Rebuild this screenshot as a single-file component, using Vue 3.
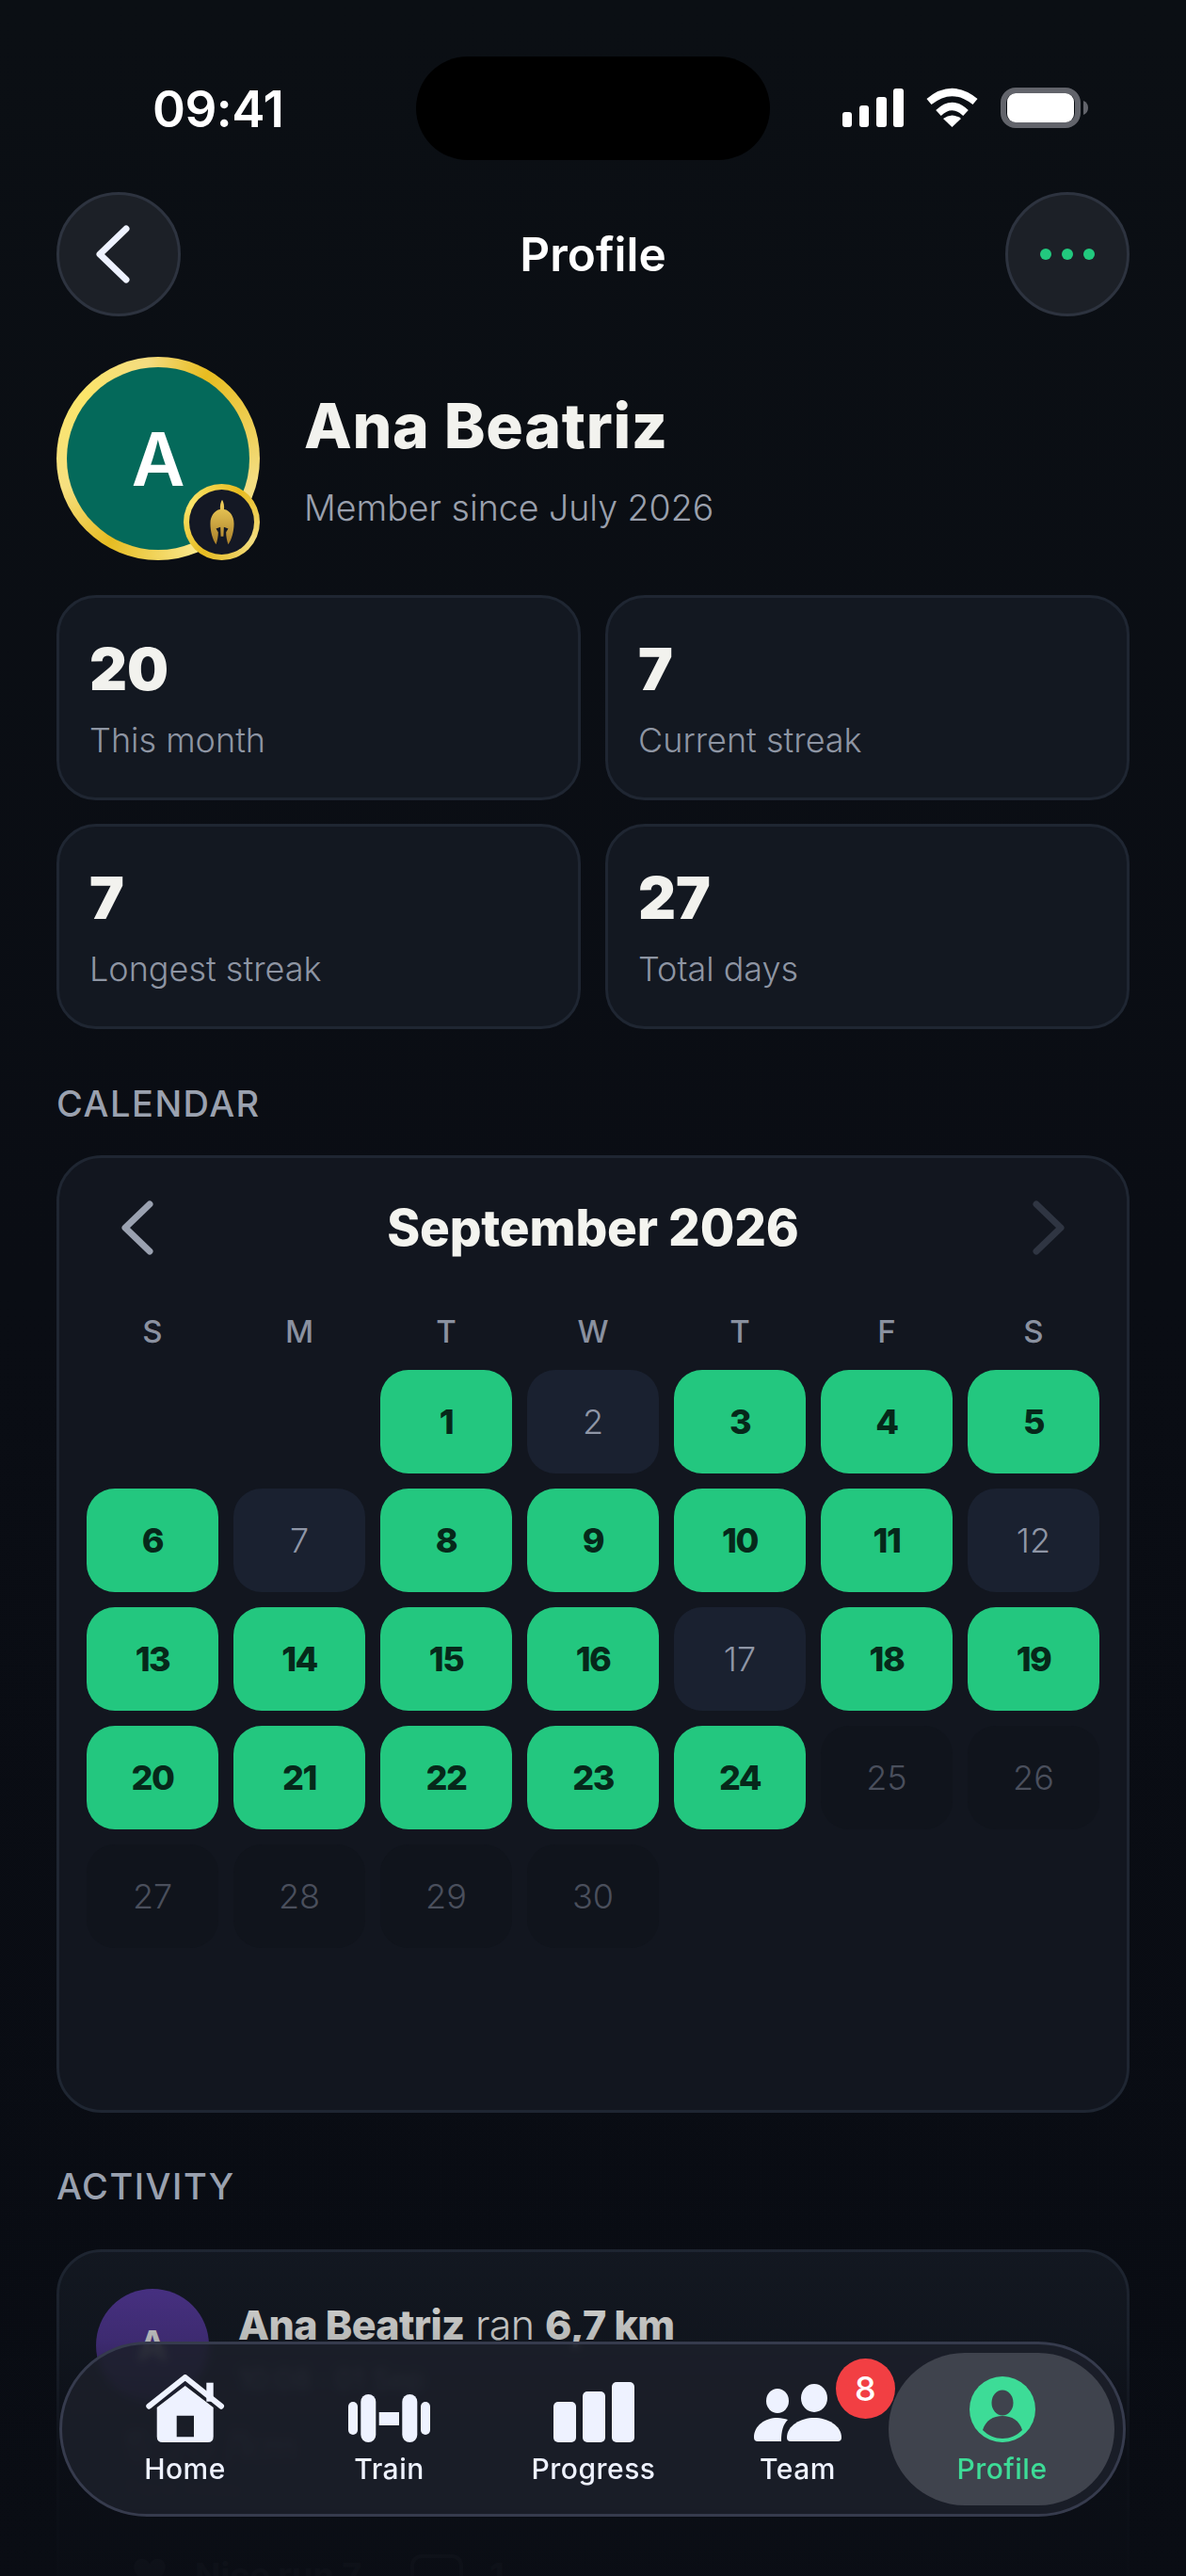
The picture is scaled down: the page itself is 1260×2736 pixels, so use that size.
<script setup>
const stats = [
  { value: '20', label: 'This month' },
  { value: '7', label: 'Current streak' },
  { value: '7', label: 'Longest streak' },
  { value: '27', label: 'Total days' },
]
const weekdays = ['S', 'M', 'T', 'W', 'T', 'F', 'S']
const missed = [2, 7, 12, 17]
const blanks = [1, 2]
const days = Array.from({ length: 30 }, (_, i) => {
  const n = i + 1
  return { n, state: n > 24 ? 'future' : missed.includes(n) ? 'missed' : 'done' }
})
</script>

<template>
  <div class="page">
    <div class="island"></div>
    <header class="status">
      <span class="time">09:41</span>
      <div class="status-icons">
        <svg class="signal" width="65" height="41" viewBox="0 0 65 41" fill="#fff">
          <rect x="0" y="25" width="10" height="16" rx="3" />
          <rect x="18" y="18" width="10" height="23" rx="3" />
          <rect x="36" y="9" width="11" height="32" rx="3" />
          <rect x="54" y="0" width="11" height="41" rx="3" />
        </svg>
        <svg class="wifi" width="57" height="42" viewBox="0 0 57 42" fill="none" stroke="#fff">
          <path d="M4 15 Q28.5 -5 53 15" stroke-width="8" />
          <path d="M14 27 Q28.5 13 43 27" stroke-width="8" />
          <path d="M28.5 42 L19 33 Q28.5 26 38 33 Z" fill="#fff" stroke="none" />
        </svg>
        <svg class="battery" width="93" height="43" viewBox="0 0 93 43" fill="none">
          <rect x="3" y="3" width="79" height="37" rx="13" stroke="#62646b" stroke-width="6" />
          <rect x="7" y="6" width="71" height="31" rx="9" fill="#fff" />
          <path d="M88 14 Q93 16 93 21.5 Q93 27 88 29 Z" fill="#62646b" />
        </svg>
      </div>
    </header>

    <nav class="topbar">
      <button class="round">
        <svg width="36" height="62" viewBox="0 0 36 62" fill="none" stroke="#eef2ff" stroke-width="7" stroke-linecap="round" stroke-linejoin="round">
          <path d="M32 4 L4 31 L32 58" />
        </svg>
      </button>
      <h1 class="title">Profile</h1>
      <button class="round">
        <span class="dots"><i></i><i></i><i></i></span>
      </button>
    </nav>

    <section class="identity">
      <div class="avatar">
        <div class="avatar-fill">A</div>
        <div class="rank">
          <div class="rank-inner">
            <svg width="26" height="52" viewBox="0 0 28 52">
              <defs>
                <linearGradient id="gold" x1="0" y1="0" x2="0" y2="1">
                  <stop offset="0" stop-color="#f3d15c" />
                  <stop offset="1" stop-color="#a97f2a" />
                </linearGradient>
              </defs>
              <path fill="url(#gold)" d="M14 0 C15.8 3 16.6 7 16.2 11 C23 12 27.5 19 27.5 27 C27.5 36 25 45 21 51 C19.5 47 18.5 42 18.5 37 L21 33 L16 31 L15.5 42 L12.5 42 L12 31 L7 33 L9.5 37 C9.5 42 8.5 47 7 51 C3 45 .5 36 .5 27 C.5 19 5 12 11.8 11 C11.4 7 12.2 3 14 0 Z" />
            </svg>
          </div>
        </div>
      </div>
      <div class="who">
        <h2 class="name">Ana Beatriz</h2>
        <p class="since">Member since July 2026</p>
      </div>
    </section>

    <section class="stats">
      <div v-for="s in stats" :key="s.label" class="stat">
        <div class="stat-value">{{ s.value }}</div>
        <div class="stat-label">{{ s.label }}</div>
      </div>
    </section>

    <h3 class="section cal-heading">CALENDAR</h3>
    <section class="calendar">
      <div class="month">
        <svg width="34" height="58" viewBox="0 0 34 58" fill="none" stroke="#9aa1b0" stroke-width="7" stroke-linecap="round" stroke-linejoin="round">
          <path d="M30 4 L4 29 L30 54" />
        </svg>
        <span class="month-name">September 2026</span>
        <svg width="34" height="58" viewBox="0 0 34 58" fill="none" stroke="#2f3542" stroke-width="7" stroke-linecap="round" stroke-linejoin="round">
          <path d="M4 4 L30 29 L4 54" />
        </svg>
      </div>
      <div class="weekdays">
        <span v-for="(d, i) in weekdays" :key="i">{{ d }}</span>
      </div>
      <div class="days">
        <span v-for="b in blanks" :key="'b' + b"></span>
        <div v-for="d in days" :key="d.n" class="day" :class="d.state">{{ d.n }}</div>
      </div>
    </section>

    <h3 class="section act-heading">ACTIVITY</h3>
    <section class="activity">
      <div class="entry">
        <div class="entry-avatar">A</div>
        <div>
          <p class="entry-line"><b>Ana Beatriz</b> ran <b>6,7 km</b></p>
          <p class="entry-time">10:08 · 01 Sep</p>
        </div>
      </div>
      <div class="entry-metric">5:20 /km</div>
      <div class="entry-caption">Pace today</div>
      <div class="entry-foot">
        <svg width="40" height="40" viewBox="0 0 24 24" fill="#4d5360"><path d="M12 21 C5 15 2 12 2 8 C2 5 4 3 7 3 C9 3 11 4 12 6 C13 4 15 3 17 3 C20 3 22 5 22 8 C22 12 19 15 12 21 Z" /></svg>
        <span>Nice run 7</span>
        <svg class="foot-box" width="56" height="40" viewBox="0 0 56 40" fill="none" stroke="#4d5360" stroke-width="4"><rect x="2" y="2" width="52" height="44" rx="10" /></svg>
        <span>1</span>
      </div>
    </section>

    <div class="fade"></div>

    <nav class="tabbar">
      <div class="tab">
        <svg width="84" height="72" viewBox="0 0 84 72">
          <path d="M11.7 35 L41.7 12 L71.7 35 V66 Q71.7 72 65.7 72 H17.7 Q11.7 72 11.7 66 Z M32.7 43.7 V66.3 H51 V43.7 Z" fill="#eef2ff" fill-rule="evenodd" />
          <path d="M3.3 33.7 L41.7 3 L80 33.7" fill="none" stroke="#eef2ff" stroke-width="6" stroke-linecap="round" stroke-linejoin="round" />
          <rect x="64.3" y="8.7" width="7.4" height="20" fill="#eef2ff" />
        </svg>
        <span>Home</span>
      </div>
      <div class="tab">
        <svg width="87" height="51" viewBox="0 0 87 51" fill="#eef2ff">
          <rect x="0" y="8" width="10" height="35" rx="5" />
          <rect x="13.3" y="0" width="16" height="51" rx="8" />
          <rect x="32.7" y="19" width="21.3" height="14" />
          <rect x="57.3" y="0" width="16" height="51" rx="8" />
          <rect x="77" y="8" width="10" height="35" rx="5" />
        </svg>
        <span>Train</span>
      </div>
      <div class="tab">
        <svg width="86" height="64" viewBox="0 0 86 64" fill="#eef2ff">
          <rect x="0" y="21" width="24" height="43" rx="5" />
          <rect x="31" y="10" width="24" height="54" rx="5" />
          <rect x="62" y="0" width="24" height="64" rx="5" />
        </svg>
        <span>Progress</span>
      </div>
      <div class="tab">
        <svg width="93" height="62" viewBox="0 0 93 62" fill="#eef2ff">
          <ellipse cx="25" cy="18" rx="12" ry="13" />
          <ellipse cx="64" cy="15" rx="14" ry="15" />
          <path d="M35 57 C35 44 50 36 64 36 C78 36 93 44 93 57 Q93 61 89 61 H39 Q35 61 35 57 Z" />
          <path d="M0 57 C0 44 12 36 25 36 C29 36 33 37 36 38 C31 43 29 50 29 61 H4 Q0 61 0 57 Z" />
        </svg>
        <span>Team</span>
        <b class="badge">8</b>
      </div>
      <div class="tab active">
        <svg width="70" height="70" viewBox="0 0 70 70">
          <circle cx="35" cy="35" r="35" fill="#3ddc97" />
          <ellipse cx="35" cy="28" rx="11.5" ry="13.5" fill="#3f434d" />
          <path d="M14 57 C17 47 25 42 35 42 C45 42 53 47 56 57 C50 63 43 66 35 66 C27 66 20 63 14 57 Z" fill="#3f434d" />
        </svg>
        <span>Profile</span>
      </div>
    </nav>
  </div>
</template>

<style>
html, body { margin: 0; background: #0a0d14; }
</style>

<style scoped>
* { box-sizing: border-box; }
.page {
  position: relative;
  width: 1260px;
  height: 2736px;
  overflow: hidden;
  padding: 0 60px;
  background: linear-gradient(180deg, #0b0f14 0%, #0a0d14 50%, #090c13 100%);
  font-family: Inter, "Liberation Sans", sans-serif;
  color: #f2f2ee;
}
h1, h2, h3, p { margin: 0; }
.island {
  position: absolute;
  left: 442px;
  top: 60px;
  width: 376px;
  height: 110px;
  border-radius: 55px;
  background: #000;
}
.status {
  height: 204px;
  display: flex;
  justify-content: space-between;
  padding: 93px 44px 0 102px;
}
.time { font-size: 53px; line-height: 46px; font-weight: 600; color: #fff; letter-spacing: -0.5px; }
.status-icons { display: flex; gap: 23px; height: 43px; align-items: flex-start; }
.signal { margin-top: 1px; }
.topbar {
  height: 132px;
  display: flex;
  align-items: center;
  justify-content: space-between;
}
.round {
  width: 132px;
  height: 132px;
  padding: 0;
  border-radius: 50%;
  background: #1c2027;
  border: 3px solid #2d333f;
  display: flex;
  align-items: center;
  justify-content: center;
}
.round svg { margin-left: -12px; }
.title { font-size: 49.5px; font-weight: 600; color: #fff; }
.dots { display: flex; gap: 11px; }
.dots i { width: 12px; height: 12px; border-radius: 50%; background: #22c97e; }
.identity {
  margin-top: 43px;
  display: flex;
  align-items: center;
  gap: 47px;
}
.avatar {
  position: relative;
  width: 216px;
  height: 216px;
  flex: none;
  border-radius: 50%;
  padding: 11px;
  background: conic-gradient(from 30deg, #e8bc20, #f3dd80 20%, #fbe98e 35%, #e6bc22 50%, #f6e080 62%, #fbe56a 78%, #f4dc80 90%, #e8bc20);
}
.avatar-fill {
  width: 100%;
  height: 100%;
  border-radius: 50%;
  background: #04695a;
  color: #fff;
  display: flex;
  align-items: center;
  justify-content: center;
  font-size: 78px;
  font-weight: 600;
}
.rank {
  position: absolute;
  right: 0;
  bottom: 0;
  width: 81px;
  height: 81px;
  border-radius: 50%;
  padding: 6px;
  background: conic-gradient(from 30deg, #e8bc20, #f3dd80 25%, #e6bc22 50%, #fbe56a 75%, #e8bc20);
}
.rank-inner {
  width: 100%;
  height: 100%;
  border-radius: 50%;
  background: #141824;
  display: flex;
  align-items: center;
  justify-content: center;
}
.name { font-size: 66px; line-height: 80px; font-weight: 800; color: #f2f2ee; letter-spacing: .7px; }
.since { margin-top: 23px; margin-bottom: -3px; font-size: 37.5px; line-height: 50px; font-weight: 300; color: #9aa0ad; }
.stats {
  margin-top: 37px;
  display: grid;
  grid-template-columns: 557px 557px;
  gap: 25px;
  justify-content: space-between;
}
.stat {
  height: 218px;
  padding: 44px 32px 0;
  border-radius: 42px;
  background: #131821;
  border: 3px solid #1f2632;
}
.stat-value { font-size: 62px; line-height: 64px; font-weight: 900; color: #f2f2ee; }
.stat-label { margin-top: 19px; font-size: 36px; line-height: 48px; font-weight: 300; color: #8e95a3; }
.section {
  font-size: 38px;
  line-height: 44px;
  font-weight: 500;
  letter-spacing: 1.5px;
  color: #9aa1af;
}
.cal-heading { margin-top: 57px; }
.act-heading { margin-top: 56px; }
.calendar {
  margin-top: 33px;
  height: 1017px;
  padding: 0 29px;
  border-radius: 48px;
  background: #12161f;
  border: 3px solid #1f2632;
}
.month {
  height: 148px;
  padding: 0 37px;
  display: flex;
  align-items: center;
  justify-content: space-between;
}
.month-name { font-size: 53px; font-weight: 800; color: #f4f4ef; letter-spacing: -.2px; }
.weekdays {
  display: grid;
  grid-template-columns: repeat(7, 140px);
  gap: 16px;
  height: 77px;
  padding-top: 16px;
  text-align: center;
  font-size: 33px;
  line-height: 40px;
  font-weight: 500;
  color: #8a91a0;
}
.days {
  display: grid;
  grid-template-columns: repeat(7, 140px);
  grid-auto-rows: 110px;
  gap: 16px;
}
.day {
  border-radius: 30px;
  display: flex;
  align-items: center;
  justify-content: center;
  font-size: 36px;
}
.day.done { background: #23c77f; color: #06281a; font-weight: 800; letter-spacing: -1.5px; }
.day.missed { background: #1a2130; color: #8f96a6; font-weight: 300; }
.day.future { background: #10141c; color: #4a4f5c; font-weight: 300; }
.activity {
  margin-top: 45px;
  height: 600px;
  padding: 39px 39px;
  border-radius: 48px;
  background: #131821;
  border: 3px solid #1f2632;
}
.entry { display: flex; gap: 31px; }
.entry-avatar {
  width: 120px;
  height: 120px;
  flex: none;
  border-radius: 50%;
  background: #4f3590;
  color: #e8e8e8;
  display: flex;
  align-items: center;
  justify-content: center;
  font-size: 44px;
  font-weight: 600;
}
.entry-line { margin-top: 12px; font-size: 43px; line-height: 52px; font-weight: 300; letter-spacing: -.6px; }
.entry-line b { font-weight: 800; }
.entry-time { margin-top: 14px; font-size: 30px; color: #8e95a3; }
.entry-metric { margin-top: 22px; margin-left: 30px; font-size: 42px; font-weight: 700; color: #7f8591; }
.entry-caption { margin-top: 4px; margin-left: 30px; font-size: 24px; color: #6a7080; }
.entry-foot {
  margin-top: 56px;
  margin-left: 37px;
  display: flex;
  gap: 28px;
  font-size: 36px;
  font-weight: 700;
  color: #4d5360;
}
.foot-box { margin-left: 24px; }
.fade {
  position: absolute;
  left: 0;
  right: 0;
  bottom: 0;
  height: 360px;
  background: linear-gradient(180deg, rgba(10, 13, 20, 0) 0%, rgba(10, 13, 20, 0.25) 30%, rgba(10, 13, 20, 0.85) 65%, rgba(10, 13, 20, 0.95) 100%);
}
.tabbar {
  position: absolute;
  left: 63px;
  top: 2487px;
  width: 1133px;
  height: 186px;
  padding-left: 22px;
  display: flex;
  border-radius: 93px;
  background: rgba(28, 32, 42, 0.86);
  border: 3px solid #363b4d;
  backdrop-filter: blur(5px);
}
.tab {
  position: relative;
  width: 217px;
  height: 180px;
  flex: none;
  display: flex;
  flex-direction: column;
  align-items: center;
  justify-content: flex-end;
  padding-bottom: 29px;
  font-size: 30px;
  line-height: 38px;
  font-weight: 500;
  letter-spacing: .5px;
  color: #eef2ff;
}
.tab svg { position: relative; margin-bottom: 9px; }
.tab span { position: relative; }
.tab.active { color: #3ddc97; }
.tab.active::before {
  content: '';
  position: absolute;
  left: -12px;
  right: -11px;
  top: 9px;
  bottom: 9px;
  border-radius: 81px;
  background: #3f434d;
}
.badge {
  position: absolute;
  left: 149px;
  top: 15px;
  width: 63px;
  height: 64px;
  border-radius: 50%;
  background: #f23f43;
  color: #fff;
  display: flex;
  align-items: center;
  justify-content: center;
  font-size: 36px;
  font-weight: 500;
}
</style>
